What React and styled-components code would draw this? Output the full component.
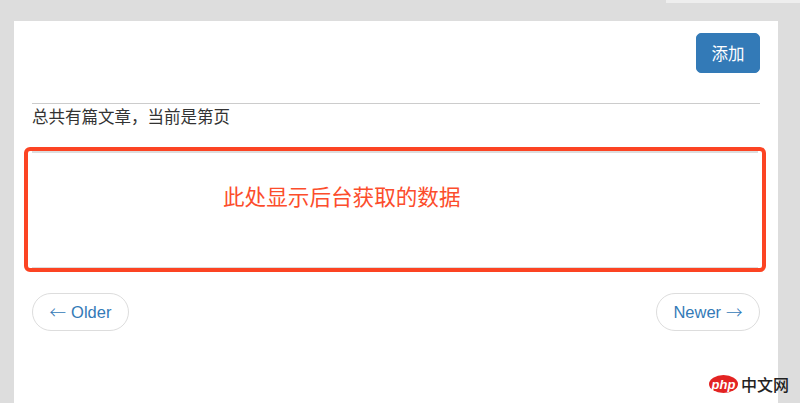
import React from 'react'
import styled, { createGlobalStyle } from 'styled-components'

const GlobalStyle = createGlobalStyle`
  html, body {
    margin: 0;
    padding: 0;
    background: #dddddd;
  }
  body {
    font-family: "Liberation Sans", "Noto Sans CJK SC", sans-serif;
    overflow: hidden;
  }
`

const Page = styled.div`
  position: relative;
  width: 800px;
  height: 403px;
  padding: 21px 22px 0 14px;
  box-sizing: border-box;
  overflow: hidden;
`

const TopStrip = styled.div`
  position: absolute;
  top: 0;
  right: 0;
  width: 134px;
  height: 3px;
  background: #eeeeee;
`

const Card = styled.main`
  background: #fff;
  height: 382px;
  padding: 12px 18px 0;
  box-sizing: border-box;
`

const Toolbar = styled.div`
  display: flex;
  justify-content: flex-end;
  height: 70px;
  border-bottom: 1px solid #cccccc;
  box-sizing: content-box;
`

const AddButton = styled.button`
  width: 64px;
  height: 40px;
  padding: 0;
  border: 1px solid #337ab7;
  border-radius: 5px;
  background: #337ab7;
  color: #fff;
  font-family: "Noto Sans CJK SC", sans-serif;
  font-size: 16.5px;
  line-height: 1;
`

const Summary = styled.p`
  margin: 0;
  height: 43px;
  box-sizing: border-box;
  color: #333;
  font-family: "Noto Sans CJK SC", sans-serif;
  font-size: 16.5px;
  line-height: 24px;
`

const DataBox = styled.section`
  position: relative;
  margin: 0 0 0 -8px;
  width: 742px;
  height: 125px;
  box-sizing: border-box;
  border: 4px solid #fc4423;
  border-radius: 6px;
  padding: 30px 0 0 195px;
  color: #fc4d2c;
  font-family: "Noto Sans CJK SC", sans-serif;
  font-size: 21.6px;
  line-height: 30px;
`

const InnerRule = styled.div`
  position: absolute;
  top: ${p => (p.$bottom ? 'auto' : '0')};
  bottom: ${p => (p.$bottom ? '0' : 'auto')};
  left: 4px;
  right: 4px;
  height: ${p => (p.$bottom ? '1px' : '2px')};
  background: #dddddd;
`

const Pager = styled.nav`
  display: flex;
  justify-content: space-between;
  margin-top: 21px;
`

const PagerLink = styled.a`
  display: flex;
  align-items: center;
  justify-content: center;
  gap: 5px;
  width: ${p => p.$width}px;
  height: 38px;
  box-sizing: border-box;
  border: 1px solid #dddddd;
  border-radius: 19px;
  background: #fff;
  color: #337ab7;
  font-family: "Liberation Sans", Arial, sans-serif;
  font-size: 16.5px;
  text-decoration: none;
`

const Arrow = styled.span`
  font-family: "Noto Sans CJK SC", sans-serif;
  font-size: 16.5px;
  font-weight: 300;
  line-height: 1;
`

const Watermark = styled.div`
  position: absolute;
  left: 709px;
  top: 375px;
  display: flex;
  align-items: center;
  gap: 3px;
`

const PhpBadge = styled.span`
  display: flex;
  align-items: center;
  justify-content: center;
  width: 29px;
  height: 18px;
  border-radius: 50%;
  background: #e32322;
  color: #fff;
  font-family: "Liberation Sans", sans-serif;
  font-size: 13px;
  font-style: italic;
  font-weight: 700;
  line-height: 1;
`

const SiteName = styled.span`
  color: #222;
  font-family: "Noto Sans CJK SC", sans-serif;
  font-size: 16px;
  font-weight: 500;
  line-height: 18px;
`

export default function App() {
  return (
    <Page>
      <GlobalStyle />
      <TopStrip />
      <Card>
        <Toolbar>
          <AddButton>添加</AddButton>
        </Toolbar>
        <Summary>总共有篇文章，当前是第页</Summary>
        <DataBox>
          <InnerRule />
          <InnerRule $bottom />
          此处显示后台获取的数据
        </DataBox>
        <Pager>
          <PagerLink href="#" $width={97}><Arrow>←</Arrow>Older</PagerLink>
          <PagerLink href="#" $width={104}>Newer<Arrow>→</Arrow></PagerLink>
        </Pager>
      </Card>
      <Watermark>
        <PhpBadge>php</PhpBadge>
        <SiteName>中文网</SiteName>
      </Watermark>
    </Page>
  )
}
